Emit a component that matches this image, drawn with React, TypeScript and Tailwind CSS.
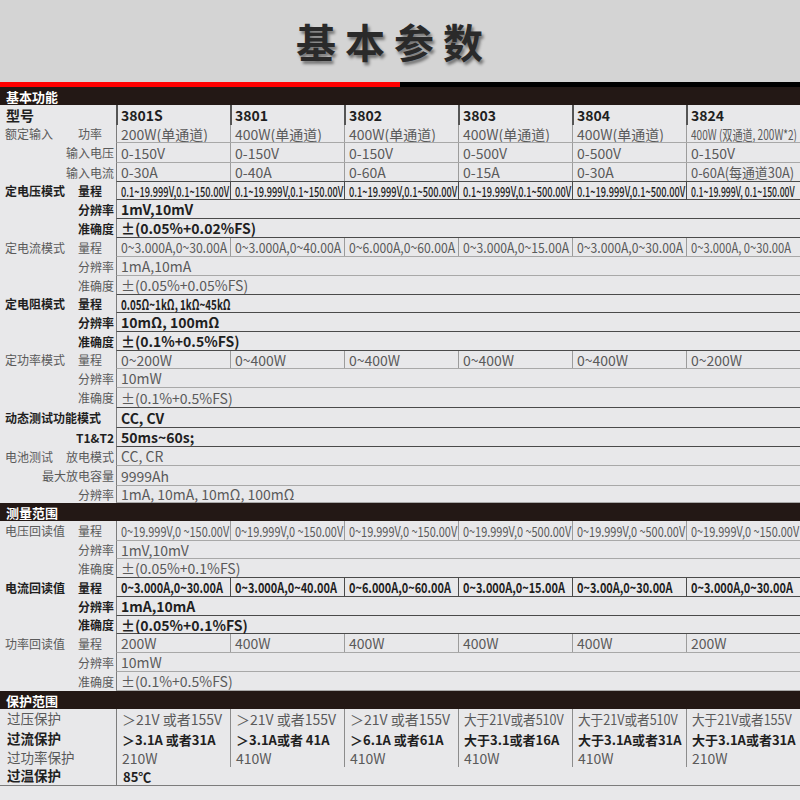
import React from "react";

type Row = {
  h: string;
  main?: string;
  sub?: string;
  dark?: boolean;
  vals: string[];
  vb?: boolean;
  sc?: string;
  lastSc?: string;
  lineDark?: boolean;
};

const s1: Row[] = [
  { h: "h-[18px]", main: "额定输入", sub: "功率", lastSc: "scale-x-[0.72]", vals: ["200W(单通道)", "400W(单通道)", "400W(单通道)", "400W(单通道)", "400W(单通道)", "400W (双通道, 200W*2)"] },
  { h: "h-[20px]", sub: "输入电压", vals: ["0-150V", "0-150V", "0-150V", "0-500V", "0-500V", "0-150V"] },
  { h: "h-[19px]", sub: "输入电流", lastSc: "scale-x-[0.92]", vals: ["0-30A", "0-40A", "0-60A", "0-15A", "0-30A", "0-60A(每通道30A)"], lineDark: true },
  { h: "h-[18px]", main: "定电压模式", sub: "量程", dark: true, sc: "scale-x-[0.66]", lastSc: "scale-x-[0.62]", vals: ["0.1~19.999V,0.1~150.00V", "0.1~19.999V,0.1~150.00V", "0.1~19.999V,0.1~500.00V", "0.1~19.999V,0.1~500.00V", "0.1~19.999V,0.1~500.00V", "0.1~19.999V, 0.1~150.00V"] },
  { h: "h-[19px]", sub: "分辨率", dark: true, vb: true, vals: ["1mV,10mV"] },
  { h: "h-[19px]", sub: "准确度", dark: true, vb: true, vals: ["±(0.05%+0.02%FS)"] },
  { h: "h-[19px]", main: "定电流模式", sub: "量程", sc: "scale-x-[0.87]", lastSc: "scale-x-[0.8]", vals: ["0~3.000A,0~30.00A", "0~3.000A,0~40.00A", "0~6.000A,0~60.00A", "0~3.000A,0~15.00A", "0~3.000A,0~30.00A", "0~3.000A, 0~30.00A"] },
  { h: "h-[19px]", sub: "分辨率", vals: ["1mA,10mA"] },
  { h: "h-[19px]", sub: "准确度", vals: ["±(0.05%+0.05%FS)"], lineDark: true },
  { h: "h-[18px]", main: "定电阻模式", sub: "量程", dark: true, vb: true, sc: "scale-x-[0.7]", vals: ["0.05Ω~1kΩ, 1kΩ~45kΩ"] },
  { h: "h-[19px]", sub: "分辨率", dark: true, vb: true, vals: ["10mΩ, 100mΩ"] },
  { h: "h-[19px]", sub: "准确度", dark: true, vb: true, vals: ["±(0.1%+0.5%FS)"] },
  { h: "h-[18px]", main: "定功率模式", sub: "量程", vals: ["0~200W", "0~400W", "0~400W", "0~400W", "0~400W", "0~200W"] },
  { h: "h-[19px]", sub: "分辨率", vals: ["10mW"] },
  { h: "h-[20px]", sub: "准确度", vals: ["±(0.1%+0.5%FS)"], lineDark: true },
  { h: "h-[20px]", main: "动态测试功能模式", dark: true, vb: true, vals: ["CC, CV"] },
  { h: "h-[19px]", sub: "T1&T2", dark: true, vb: true, vals: ["50ms~60s;"] },
  { h: "h-[19px]", main: "电池测试", sub: "放电模式", vals: ["CC, CR"] },
  { h: "h-[20px]", sub: "最大放电容量", vals: ["9999Ah"] },
  { h: "h-[17px]", sub: "分辨率", vals: ["1mA, 10mA, 10mΩ, 100mΩ"] },
];

const s2: Row[] = [
  { h: "h-[20px]", main: "电压回读值", sub: "量程", sc: "scale-x-[0.78]", vals: ["0~19.999V,0 ~150.00V", "0~19.999V,0 ~150.00V", "0~19.999V,0 ~150.00V", "0~19.999V,0 ~500.00V", "0~19.999V,0 ~500.00V", "0~19.999V,0 ~150.00V"] },
  { h: "h-[18px]", sub: "分辨率", vals: ["1mV,10mV"] },
  { h: "h-[19px]", sub: "准确度", vals: ["±(0.05%+0.1%FS)"], lineDark: true },
  { h: "h-[19px]", main: "电流回读值", sub: "量程", dark: true, vb: true, sc: "scale-x-[0.78]", vals: ["0~3.000A,0~30.00A", "0~3.000A,0~40.00A", "0~6.000A,0~60.00A", "0~3.000A,0~15.00A", "0~3.00A,0~30.00A", "0~3.000A,0~30.00A"] },
  { h: "h-[19px]", sub: "分辨率", dark: true, vb: true, vals: ["1mA,10mA"] },
  { h: "h-[18px]", sub: "准确度", dark: true, vb: true, vals: ["±(0.05%+0.1%FS)"] },
  { h: "h-[19px]", main: "功率回读值", sub: "量程", vals: ["200W", "400W", "400W", "400W", "400W", "200W"] },
  { h: "h-[19px]", sub: "分辨率", vals: ["10mW"] },
  { h: "h-[19px]", sub: "准确度", vals: ["±(0.1%+0.5%FS)"] },
];

const models = ["3801S", "3801", "3802", "3803", "3804", "3824"];

function Header({ title }: { title: string }) {
  return (
    <div className="h-[18px] bg-[#231815] flex items-center pl-[6px]">
      <span className="text-white text-[13px] font-bold leading-none">{title}</span>
    </div>
  );
}

function Label({ main, sub, dark }: { main?: string; sub?: string; dark?: boolean }) {
  const c = dark ? "text-[#1f1f1f] font-bold" : "text-[#5a5a5a]";
  return (
    <div className={"w-[116px] shrink-0 flex items-center text-[12px] leading-none " + c}>
      <span className="pl-[5px] flex-1 whitespace-nowrap">{main}</span>
      {sub && <span className="min-w-[36px] mr-[2px] whitespace-nowrap">{sub}</span>}
    </div>
  );
}

function TableRow({ r }: { r: Row }) {
  const line = r.dark || r.lineDark ? "border-[#4a4a4a]" : "border-[#a8a8a8]";
  const sep = r.dark ? "border-[#4a4a4a]" : "border-[#9c9c9c]";
  const txt = r.dark ? "text-[#1f1f1f]" : "text-[#5a5a5a]";
  const wt = r.vb ? "font-bold" : r.dark ? "font-medium" : "";
  return (
    <div className={"flex " + r.h}>
      <Label main={r.main} sub={r.sub} dark={r.dark} />
      <div className={"w-[684px] flex border-l border-l-[#7c7c7c] border-b " + line}>
        {r.vals.length === 1 ? (
          <div className={"flex-1 flex items-center pl-[4px] text-[14px] leading-none " + txt + " " + wt}>
            <span className={"inline-block origin-left whitespace-nowrap " + (r.sc ?? "")}>{r.vals[0]}</span>
          </div>
        ) : (
          r.vals.map((v, i) => (
            <div
              key={i}
              className={
                (i === 0 ? "w-[113px] " : "w-[114px] border-l " + sep + " ") +
                "shrink-0 flex items-center pl-[4px] overflow-x-hidden text-[14px] leading-none " + txt + " " + wt
              }
            >
              <span className={"inline-block origin-left whitespace-nowrap " + ((i === 5 && r.lastSc ? r.lastSc : r.sc) ?? "")}>{v}</span>
            </div>
          ))
        )}
      </div>
    </div>
  );
}

type PRow = { h: string; label: string; bold?: boolean; vals: string[]; scs?: string[] };
const s3: PRow[] = [
  {
    h: "h-[20px]",
    label: "过压保护",
    vals: ["＞21V 或者155V", "＞21V 或者155V", "＞21V 或者155V", "大于21V或者510V", "大于21V或者510V", "大于21V或者155V"],
    scs: ["", "", "", "scale-x-[0.9]", "scale-x-[0.9]", "scale-x-[0.9]"],
  },
  { h: "h-[20px]", label: "过流保护", bold: true, vals: ["＞3.1A 或者31A", "＞3.1A或者 41A", "＞6.1A 或者61A", "大于3.1或者16A", "大于3.1A或者31A", "大于3.1A或者31A"] },
  { h: "h-[18px]", label: "过功率保护", vals: ["210W", "410W", "410W", "410W", "410W", "210W"] },
  { h: "h-[18px]", label: "过温保护", bold: true, vals: ["85℃"] },
];

function PTableRow({ r }: { r: PRow }) {
  const lbl = r.bold ? "text-[#1f1f1f] font-bold" : "text-[#5a5a5a]";
  const txt = r.bold ? "text-[#1f1f1f] font-bold text-[13px]" : "text-[#5a5a5a] text-[14px]";
  return (
    <div className={"flex " + r.h}>
      <div className={"w-[116px] shrink-0 flex items-center pl-[7px] text-[13.5px] leading-none whitespace-nowrap " + lbl}>{r.label}</div>
      <div className="w-[684px] flex border-l border-l-[#7c7c7c]">
        {r.vals.length === 1 ? (
          <div className={"flex-1 flex items-center pl-[6px] leading-none " + txt}>{r.vals[0]}</div>
        ) : (
          r.vals.map((v, i) => (
            <div
              key={i}
              className={
                (i === 0 ? "w-[113px] " : "w-[114px] border-l border-[#8c8c8c] ") +
                "shrink-0 flex items-center pl-[5px] overflow-x-hidden whitespace-nowrap leading-none " + txt
              }
            >
              <span className={"inline-block origin-left whitespace-nowrap " + (r.scs ? r.scs[i] : "")}>{v}</span>
            </div>
          ))
        )}
      </div>
    </div>
  );
}

export default function App() {
  return (
    <div className="w-[800px] h-[800px] bg-[#e8e8ea] font-['Noto_Sans_CJK_SC','Noto_Sans',sans-serif] overflow-hidden">
      <div className="h-[82px] bg-[#d4d4d4] flex items-center justify-center pr-[12px]">
        <span className="text-[40px] font-bold tracking-[9px] text-[#2a2a2a] leading-none [text-shadow:2px_3px_3px_rgba(0,0,0,0.45)]">
          基本参数
        </span>
      </div>
      <div className="h-[5px] flex">
        <div className="w-[400px] bg-[#ff0000]" />
        <div className="flex-1 bg-black" />
      </div>
      <Header title="基本功能" />
      <div className="flex h-[20px]">
        <div className="w-[116px] shrink-0 flex items-center pl-[6px] text-[14px] font-bold text-[#1f1f1f] leading-none">型号</div>
        <div className="w-[684px] flex border-l-2 border-[#555]">
          {models.map((m, i) => (
            <div
              key={i}
              className={
                (i === 0 ? "w-[112px] " : "w-[114px] border-l-2 border-[#555] ") +
                "shrink-0 flex items-center pl-[3px] text-[14px] font-bold text-[#1f1f1f] leading-none"
              }
            >
              {m}
            </div>
          ))}
        </div>
      </div>
      {s1.map((r, i) => (
        <TableRow key={i} r={r} />
      ))}
      <Header title="测量范围" />
      {s2.map((r, i) => (
        <TableRow key={i} r={r} />
      ))}
      <Header title="保护范围" />
      <div className="border-b border-[#7c7c7c]">
        {s3.map((r, i) => (
          <PTableRow key={i} r={r} />
        ))}
      </div>
    </div>
  );
}
